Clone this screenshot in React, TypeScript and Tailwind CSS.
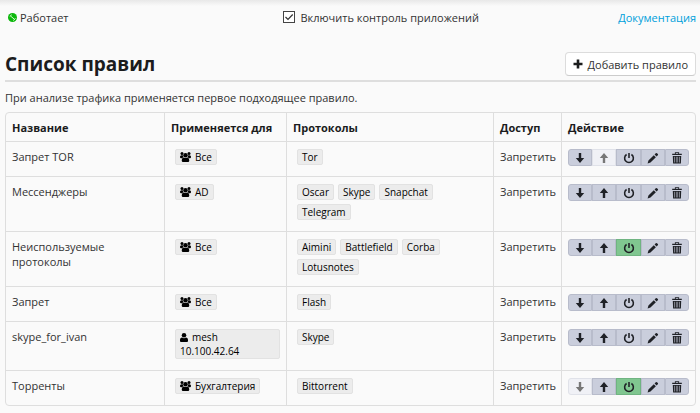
import React, { useState } from "react";
import clsx from "clsx";

interface Rule {
  id: number;
  name: string;
  target: string;
  targetKind: "group" | "user";
  protocols: string[];
  access: string;
  enabled: boolean;
}

const RULES: Rule[] = [
  { id: 1, name: "Запрет TOR", target: "Все", targetKind: "group", protocols: ["Tor"], access: "Запретить", enabled: false },
  { id: 2, name: "Мессенджеры", target: "AD", targetKind: "group", protocols: ["Oscar", "Skype", "Snapchat", "Telegram"], access: "Запретить", enabled: false },
  { id: 3, name: "Неиспользуемые протоколы", target: "Все", targetKind: "group", protocols: ["Aimini", "Battlefield", "Corba", "Lotusnotes"], access: "Запретить", enabled: true },
  { id: 4, name: "Запрет", target: "Все", targetKind: "group", protocols: ["Flash"], access: "Запретить", enabled: false },
  { id: 5, name: "skype_for_ivan", target: "mesh 10.100.42.64", targetKind: "user", protocols: ["Skype"], access: "Запретить", enabled: false },
  { id: 6, name: "Торренты", target: "Бухгалтерия", targetKind: "group", protocols: ["Bittorrent"], access: "Запретить", enabled: true },
];

function StatusIcon() {
  return (
    <svg viewBox="0 0 18 18" className="size-[9px]" aria-hidden="true">
      <circle cx="9" cy="9" r="9" fill="#0cb80c" />
      <path d="M3.500 7 7.500 3.500M5 6l8.500 7M10.500 15l4.500-4" fill="none" stroke="#d8f8d0" strokeWidth="2" />
    </svg>
  );
}

function GroupIcon() {
  return (
    <svg viewBox="0 0 22 20" className="mr-1 inline-block h-[10px] w-[11px] align-[-1px]" fill="#000" aria-hidden="true">
      <circle cx="4" cy="3" r="3" />
      <circle cx="18" cy="3" r="3" />
      <circle cx="11" cy="6.600" r="4.400" />
      <path d="M0 9.500Q0 6.500 3 6.500h2.600Q5.800 9 7.600 10.600 5.500 11 4.400 12.500H2Q0 12.500 0 9.500zM22 9.500Q22 6.500 19 6.500h-2.600Q16.200 9 14.400 10.600 16.500 11 17.600 12.500H20Q22 12.500 22 9.500z" />
      <path d="M3.500 16q0-5 4.500-5 1.400 1 3 1t3-1q4.500 0 4.500 5v1.500q0 2.500-2.500 2.500H6q-2.500 0-2.500-2.500z" />
    </svg>
  );
}

function UserIcon() {
  return (
    <svg viewBox="0 0 16 18" className="mr-1 inline-block h-[9px] w-[8px] align-[-1px]" fill="#000" aria-hidden="true">
      <circle cx="8" cy="4.500" r="4.500" />
      <path d="M0 14.500Q0 9 4.300 9 6 10.400 8 10.400T11.700 9Q16 9 16 14.500V16q0 2-2 2H2q-2 0-2-2z" />
    </svg>
  );
}

const ICONS = {
  down: <path d="M8 1.500h4v8.500h5L10 18.500 3 10h5z" />,
  up: <path d="M8 18.500h4V10h5L10 1.500 3 10h5z" />,
  power: (
    <path d="M6 4.200A7.300 7.300 0 1 0 14 4.200M10 1.500v8.500" fill="none" stroke="currentColor" strokeWidth="2.600" />
  ),
  pencil: <path d="M1 19 2.400 14.200 11.300 5.300l3.500 3.400L5.800 17.700zM12.600 4l2-2q1-1 2-.1l1.500 1.500q.9 1-.1 2l-2 2z" />,
  trash: (
    <path
      fillRule="evenodd"
      d="M6.500 0.500h7V3H18v2.200H2V3h4.500zM8 1.800V3h4V1.800zM3 6.500h14L16.500 19h-13zM5.200 8v9.500h.9V8zM8.200 8v9.500h.9V8zM10.900 8v9.500h.9V8zM13.900 8v9.500h.9V8z"
    />
  ),
};

interface ActionButtonProps {
  icon: keyof typeof ICONS;
  label: string;
  disabled?: boolean;
  active?: boolean;
  onClick?: () => void;
}

function ActionButton({ icon, label, disabled, active, onClick }: ActionButtonProps) {
  return (
    <button
      type="button"
      aria-label={label}
      title={label}
      disabled={disabled}
      onClick={onClick}
      className={clsx(
        "flex h-[17px] flex-1 items-center justify-center border first:rounded-l-[3px] last:rounded-r-[3px]",
        disabled && "border-[#e0e2e9] bg-[#f0f1f6] text-[#777]",
        !disabled && active && "border-[#70b482] bg-[#80c690] text-[#1f2126]",
        !disabled && !active && "border-[#b8bccb] bg-[#cacedc] text-[#1f2126]"
      )}
    >
      <svg viewBox="0 0 20 20" className="size-3" fill="currentColor" aria-hidden="true">
        {ICONS[icon]}
      </svg>
    </button>
  );
}

function Tag({ children }: { children: React.ReactNode }) {
  return (
    <span className="mb-1 rounded-[2px] border border-[#e2e2e2] bg-[#ececec] px-1 text-[10px] leading-[14px] text-black">
      {children}
    </span>
  );
}

const HEAD_CELL = "border-r border-[#dedede] px-[6px] text-left font-bold text-[#1b1c1d] last:border-r-0";
const CELL = "border-t border-r border-[#dedede] px-[6px] pt-[7px] pb-[7px] align-top last:border-r-0";

export default function App() {
  const [rules, setRules] = useState(RULES);
  const [controlled, setControlled] = useState(true);

  const toggle = (id: number) =>
    setRules(rules.map((r) => (r.id === id ? { ...r, enabled: !r.enabled } : r)));

  const move = (index: number, step: number) => {
    const next = [...rules];
    [next[index], next[index + step]] = [next[index + step], next[index]];
    setRules(next);
  };

  return (
    <div className="min-h-screen bg-[#fafafa] font-['Open_Sans',sans-serif] text-[11px] leading-[15px] text-[#333]">
      <div className="h-[6px] bg-linear-to-b from-[#e8e8e8] to-[#fafafa]" />
      <main className="pr-1 pb-[6px] pl-[5px]">
        <div className="flex h-[22px] items-center">
          <div className="flex w-2/5 items-center gap-[3px] pl-[3px]">
            <StatusIcon />
            <span>Работает</span>
          </div>
          <label className="flex items-center gap-[5px] pl-0.5">
            <span className="grid size-3 place-items-center">
              <input
                type="checkbox"
                checked={controlled}
                onChange={(e) => setControlled(e.target.checked)}
                className="peer col-start-1 row-start-1 size-3 appearance-none border border-[#444] bg-white"
              />
              <svg
                viewBox="0 0 12 12"
                className="pointer-events-none invisible col-start-1 row-start-1 size-3 peer-checked:visible"
                aria-hidden="true"
              >
                <path d="M2.500 6 5 8.500 9.700 3.500" fill="none" stroke="#333" strokeWidth="1.200" />
              </svg>
            </span>
            Включить контроль приложений
          </label>
          <a href="#docs" className="ml-auto text-[#009fda]">
            Документация
          </a>
        </div>

        <header className="mt-6 flex items-center justify-between border-b-2 border-[#dedede] pb-1">
          <h1 className="text-[19px] leading-6 font-bold text-[#1b1c1d]">Список правил</h1>
          <button
            type="button"
            className="flex h-6 items-center gap-1 rounded-[4px] border border-[#dcdcdc] border-b-[#cccccc] bg-white px-[7px]"
          >
            <svg viewBox="0 0 10 10" className="size-[10px]" fill="#1b1c1d" aria-hidden="true">
              <path d="M3.700 0.500h2.600v3.200h3.200v2.600H6.300v3.200H3.700V6.300H0.500V3.700h3.200z" />
            </svg>
            Добавить правило
          </button>
        </header>

        <p className="mt-2 mb-[7px]">При анализе трафика применяется первое подходящее правило.</p>

        <table className="w-full table-fixed border-separate border-spacing-0 rounded-[4px] border border-[#dedede]">
          <thead>
            <tr className="h-7">
              <th className={clsx(HEAD_CELL, "w-[159px]")}>Название</th>
              <th className={clsx(HEAD_CELL, "w-[122px]")}>Применяется для</th>
              <th className={HEAD_CELL}>Протоколы</th>
              <th className={clsx(HEAD_CELL, "w-[68px]")}>Доступ</th>
              <th className={clsx(HEAD_CELL, "w-[133px]")}>Действие</th>
            </tr>
          </thead>
          <tbody>
            {rules.map((rule, i) => (
              <tr key={rule.id}>
                <td className={CELL}>
                  <div className="max-w-[110px]">{rule.name}</div>
                </td>
                <td className={CELL}>
                  <div className="flex flex-wrap pl-1">
                    <Tag>
                      {rule.targetKind === "group" ? <GroupIcon /> : <UserIcon />}
                      {rule.target}
                    </Tag>
                  </div>
                </td>
                <td className={CELL}>
                  <div className="flex max-w-[156px] flex-wrap gap-x-1 pl-1">
                    {rule.protocols.map((p) => (
                      <Tag key={p}>{p}</Tag>
                    ))}
                  </div>
                </td>
                <td className={CELL}>{rule.access}</td>
                <td className={CELL}>
                  <div className="flex">
                    <ActionButton icon="down" label="Опустить" disabled={i === rules.length - 1} onClick={() => move(i, 1)} />
                    <ActionButton icon="up" label="Поднять" disabled={i === 0} onClick={() => move(i, -1)} />
                    <ActionButton icon="power" label="Переключить" active={rule.enabled} onClick={() => toggle(rule.id)} />
                    <ActionButton icon="pencil" label="Изменить" />
                    <ActionButton icon="trash" label="Удалить" />
                  </div>
                </td>
              </tr>
            ))}
          </tbody>
        </table>
      </main>
    </div>
  );
}
